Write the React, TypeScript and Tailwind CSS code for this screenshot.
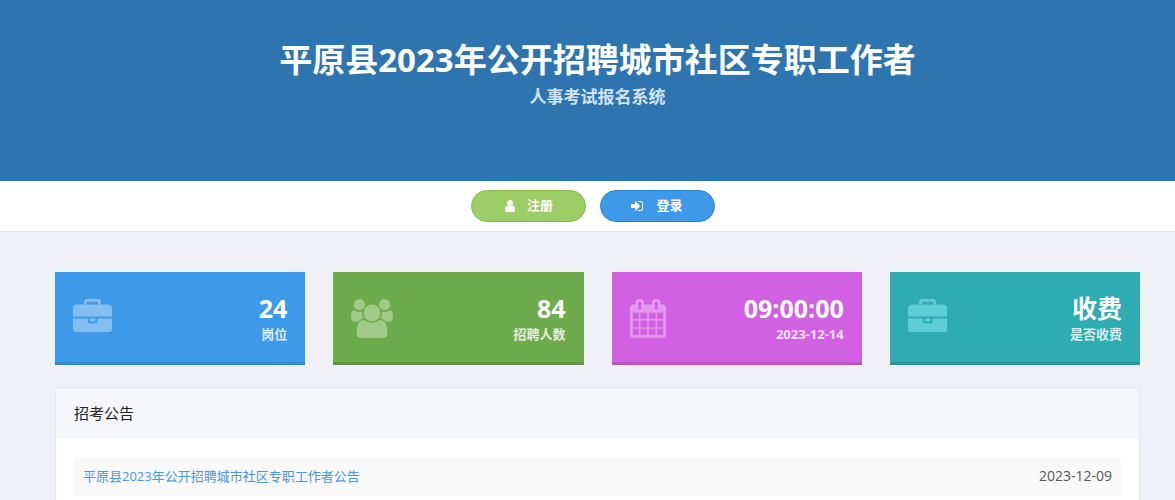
import type { ReactNode } from "react";

type IconProps = { viewBox: string; d: string; className?: string };

function Icon({ viewBox, d, className }: IconProps) {
    return (
        <svg viewBox={viewBox} fill="currentColor" aria-hidden="true" className={className}>
            <path d={d} />
        </svg>
    );
}

const BRIEFCASE =
    "M640 256h512v-128h-512v128zm1152 640v480q0 66-47 113t-113 47h-1472q-66 0-113-47t-47-113v-480h672v160q0 26 19 45t45 19h320q26 0 45-19t19-45v-160h672zm-768 0v128h-256v-128h256zm768-480v384h-1792v-384q0-66 47-113t113-47h352v-160q0-40 28-68t68-28h576q40 0 68 28t28 68v160h352q66 0 113 47t47 113z";
const USERS =
    "M593 896q-162 5-265 128h-134q-82 0-138-40.5t-56-118.5q0-353 124-353 6 0 43.5 21t97.5 42.5 119 21.5q67 0 133-23-5 37-5 66 0 139 81 256zm1071 637q0 120-73 189.5t-194 69.5h-874q-121 0-194-69.5t-73-189.5q0-53 3.5-103.5t14-109 26.5-108.5 43-97.5 62-81 85.5-53.5 111.5-20q10 0 43 21.5t73 48 107 48 135 21.5 135-21.5 107-48 73-48 43-21.5q61 0 111.5 20t85.5 53.5 62 81 43 97.5 26.5 108.5 14 109 3.5 103.5zm-1024-1277q0 106-75 181t-181 75-181-75-75-181 75-181 181-75 181 75 75 181zm704 384q0 159-112.5 271.5t-271.5 112.5-271.5-112.5-112.5-271.5 112.5-271.5 271.5-112.5 271.5 112.5 112.5 271.5zm576 225q0 78-56 118.5t-138 40.5h-134q-103-123-265-128 81-117 81-256 0-29-5-66 66 23 133 23 59 0 119-21.5t97.5-42.5 43.5-21q124 0 124 353zm-128-609q0 106-75 181t-181 75-181-75-75-181 75-181 181-75 181 75 75 181z";
const CALENDAR =
    "M192 1664h288v-288h-288v288zm352 0h320v-288h-320v288zm-352-352h288v-320h-288v320zm352 0h320v-320h-320v320zm-352-384h288v-288h-288v288zm736 736h320v-288h-320v288zm-384-736h320v-288h-320v288zm768 736h288v-288h-288v288zm-384-352h320v-320h-320v320zm-352-864v-288q0-13-9.5-22.5t-22.5-9.5h-64q-13 0-22.5 9.5t-9.5 22.5v288q0 13 9.5 22.5t22.5 9.5h64q13 0 22.5-9.5t9.5-22.5zm736 864h288v-320h-288v320zm-384-384h320v-288h-320v288zm384 0h288v-288h-288v288zm32-480v-288q0-13-9.5-22.5t-22.5-9.5h-64q-13 0-22.5 9.5t-9.5 22.5v288q0 13 9.5 22.5t22.5 9.5h64q13 0 22.5-9.5t9.5-22.5zm384-64v1280q0 52-38 90t-90 38h-1408q-52 0-90-38t-38-90v-1280q0-52 38-90t90-38h128v-96q0-66 47-113t113-47h64q66 0 113 47t47 113v96h384v-96q0-66 47-113t113-47h64q66 0 113 47t47 113v96h128q52 0 90 38t38 90z";
const USER =
    "M1536 1399q0 109-62.5 187t-150.5 78h-854q-88 0-150.5-78t-62.5-187q0-85 8.5-160.5t31.5-152 58.5-131 94-89 134.5-34.5q131 128 313 128t313-128q76 0 134.5 34.5t94 89 58.5 131 31.5 152 8.5 160.5zm-256-887q0 159-112.5 271.5t-271.5 112.5-271.5-112.5-112.5-271.5 112.5-271.5 271.5-112.5 271.5 112.5 112.5 271.5z";
const SIGN_IN =
    "M1312 896q0 26-19 45l-544 544q-19 19-45 19t-45-19-19-45v-288h-448q-26 0-45-19t-19-45v-384q0-26 19-45t45-19h448v-288q0-26 19-45t45-19 45 19l544 544q19 19 19 45zm352-352v704q0 119-84.5 203.5t-203.5 84.5h-320q-13 0-22.5-9.5t-9.5-22.5q0-4-1-20t-.5-26.5 3-23.5 10-19.5 20.5-6.5h320q66 0 113-47t47-113v-704q0-66-47-113t-113-47h-312l-11.5-1-11.5-3-8-5.5-7-9-2-13.5q0-4-1-20t-.5-26.5 3-23.5 10-19.5 20.5-6.5h320q119 0 203.5 84.5t84.5 203.5z";

const stats: { value: string; label: string; color: string; icon: ReactNode }[] = [
    {
        value: "24",
        label: "岗位",
        color: "bg-[#3e9ae8] border-[#3787cd]",
        icon: <Icon viewBox="0 0 1792 1536" d={BRIEFCASE} className="w-[39px] text-[#82bef1]" />,
    },
    {
        value: "84",
        label: "招聘人数",
        color: "bg-[#6eab4c] border-[#619643]",
        icon: <Icon viewBox="0 0 1920 1792" d={USERS} className="w-[42px] text-[#a0cb88]" />,
    },
    {
        value: "09:00:00",
        label: "2023-12-14",
        color: "bg-[#d260e3] border-[#b955c8]",
        icon: <Icon viewBox="64 0 1664 1792" d={CALENDAR} className="w-9 text-[#e398ee]" />,
    },
    {
        value: "收费",
        label: "是否收费",
        color: "bg-[#2fabb2] border-[#2a969c]",
        icon: <Icon viewBox="0 0 1792 1536" d={BRIEFCASE} className="w-[39px] text-[#5cced4]" />,
    },
];

const notices = [
    { title: "平原县2023年公开招聘城市社区专职工作者公告", date: "2023-12-09" },
];

export default function App() {
    return (
        <div className="min-h-screen bg-[#eff1f6] font-['Open_Sans','Noto_Sans_CJK_SC',sans-serif]">
            <header className="bg-[#2e75b0] pt-9 pb-[71px] pl-5 text-center">
                <h1 className="text-[33px] leading-[48px] font-bold text-white">
                    平原县2023年公开招聘城市社区专职工作者
                </h1>
                <p className="text-[17px] leading-[26px] font-bold text-[#cfe3f5]">人事考试报名系统</p>
            </header>

            <div className="flex justify-center gap-3.5 border-b border-[#e2e4e8] bg-white py-[9px] pl-2.5">
                <button
                    type="button"
                    className="flex h-8 w-[115px] items-center justify-center gap-2.5 rounded-full border border-[#86bf4e] bg-[#9ccd67] text-[13px] font-bold text-white"
                >
                    <Icon viewBox="0 0 1792 1792" d={USER} className="w-3.5" />
                    <span>注册</span>
                </button>
                <button
                    type="button"
                    className="flex h-8 w-[115px] items-center justify-center gap-3 rounded-full border border-[#2e83cf] bg-[#3e9ae8] text-[13px] font-bold text-white"
                >
                    <Icon viewBox="128 0 1664 1792" d={SIGN_IN} className="w-[13px]" />
                    <span>登录</span>
                </button>
            </div>

            <main className="pt-10 pr-[35px] pl-[55px]">
                <section className="grid grid-cols-4 gap-7">
                    {stats.map((s) => (
                        <div
                            key={s.label}
                            className={`flex items-start justify-between border-b-3 px-[18px] pt-5 pb-[18px] ${s.color}`}
                        >
                            <div className="pt-[7px]">{s.icon}</div>
                            <div className="text-right font-bold">
                                <div className="text-[25px] leading-8 text-white">{s.value}</div>
                                <div className="text-[13px] leading-5 text-white/80">{s.label}</div>
                            </div>
                        </div>
                    ))}
                </section>

                <section className="mt-[22px] rounded-xs border border-[#e5e8ed] bg-white pb-5">
                    <h2 className="bg-[#f5f6f9] px-[18px] py-[13px] text-[15px] leading-[25px] text-[#222]">
                        招考公告
                    </h2>
                    <ul className="px-[18px] pt-[19px]">
                        {notices.map((n) => (
                            <li
                                key={n.title}
                                className="flex items-center justify-between bg-[#f9f9fa] px-[9px] pt-2 pb-[10px] text-[13px] leading-5"
                            >
                                <a href="#notice" className="text-[#4a97d9] hover:underline">
                                    {n.title}
                                </a>
                                <time className="text-sm text-[#555]">{n.date}</time>
                            </li>
                        ))}
                    </ul>
                </section>
            </main>
        </div>
    );
}
